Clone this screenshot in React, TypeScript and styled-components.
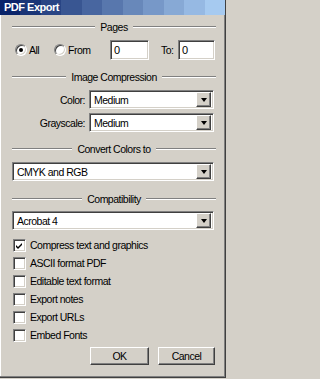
import React from 'react';
import styled, { createGlobalStyle, css } from 'styled-components';

const GlobalStyle = createGlobalStyle`
  html, body {
    margin: 0;
    padding: 0;
    background: #d4d0c8;
  }
`;

// banded title gradient, like a 256-colour display
const from = [10, 36, 106];
const to = [166, 202, 240];
const BANDS = 11;
const bandStops = Array.from({ length: BANDS }, (_, i) => {
  const t = i / (BANDS - 1);
  const c = from.map((v, k) => Math.round(v + (to[k] - v) * t));
  const a = ((i / BANDS) * 100).toFixed(2);
  const b = (((i + 1) / BANDS) * 100).toFixed(2);
  return `rgb(${c.join(',')}) ${a}%, rgb(${c.join(',')}) ${b}%`;
}).join(', ');

const sunken = css`
  border-top: 1px solid #808080;
  border-left: 1px solid #808080;
  border-bottom: 1px solid #ffffff;
  border-right: 1px solid #ffffff;
  box-shadow: inset 1px 1px 0 #404040, inset -1px -1px 0 #d4d0c8;
`;

const raised = css`
  border-top: 1px solid #ffffff;
  border-left: 1px solid #ffffff;
  border-bottom: 1px solid #404040;
  border-right: 1px solid #404040;
  box-shadow: inset -1px -1px 0 #808080;
`;

const Window = styled.div`
  box-sizing: border-box;
  width: 226px;
  height: 378px;
  background: #d4d0c8;
  border-right: 1px solid #404040;
  border-bottom: 1px solid #404040;
  box-shadow: inset -1px -1px 0 #808080, inset 1px 0 0 #ffffff;
  font-family: 'Liberation Sans', Arial, sans-serif;
  font-size: 10.5px;
  letter-spacing: -0.5px;
  color: #000;
  display: flex;
  flex-direction: column;
`;

const TitleBar = styled.div`
  height: 15px;
  line-height: 15px;
  padding-left: 4px;
  background: linear-gradient(to right, ${bandStops});
  color: #ffffff;
  font-weight: 700;
  font-size: 11px;
  letter-spacing: -0.5px;
`;

const Content = styled.div`
  display: flex;
  flex-direction: column;
  padding: 0 9px 0 12px;
`;

const GroupHeader = styled.div<{ $top: number }>`
  margin-top: ${(p) => p.$top}px;
  height: 12px;
  display: flex;
  align-items: center;
  gap: 5px;
  white-space: nowrap;

  &::before,
  &::after {
    content: '';
    flex: 1;
    height: 0;
    border-top: 1px solid #808080;
    border-bottom: 1px solid #ffffff;
  }
`;

const Row = styled.div<{ $top: number; $height?: number }>`
  margin-top: ${(p) => p.$top}px;
  height: ${(p) => p.$height ?? 19}px;
  display: flex;
  align-items: center;
`;

const RadioLabel = styled.label<{ $width: number }>`
  display: flex;
  align-items: center;
  gap: 2px;
  width: ${(p) => p.$width}px;
`;

const RadioCircle = styled.span<{ $checked?: boolean }>`
  box-sizing: border-box;
  width: 12px;
  height: 12px;
  border-radius: 50%;
  background: #ffffff;
  ${sunken};
  display: flex;
  align-items: center;
  justify-content: center;

  &::after {
    content: '';
    width: 4px;
    height: 4px;
    border-radius: 50%;
    background: ${(p) => (p.$checked ? '#000' : 'transparent')};
  }
`;

const TextBox = styled.div<{ $width: number }>`
  box-sizing: border-box;
  width: ${(p) => p.$width}px;
  height: 20px;
  background: #ffffff;
  ${sunken};
  padding: 2px 0 0 3px;
  line-height: 15px;
  font-size: 11px;
`;

const FieldLabel = styled.span`
  width: 73px;
  text-align: right;
  margin-right: 4px;
`;

const SelectBox = styled.div<{ $width: number }>`
  box-sizing: border-box;
  width: ${(p) => p.$width}px;
  height: 19px;
  background: #ffffff;
  ${sunken};
  display: flex;
  align-items: center;
  padding: 2px;
`;

const SelectValue = styled.span`
  flex: 1;
  padding-left: 2px;
  white-space: nowrap;
  overflow: hidden;
`;

const DropButton = styled.span`
  box-sizing: border-box;
  width: 15px;
  height: 15px;
  background: #d4d0c8;
  ${raised};
  display: flex;
  align-items: center;
  justify-content: center;

  &::after {
    content: '';
    width: 0;
    height: 0;
    border-left: 3.5px solid transparent;
    border-right: 3.5px solid transparent;
    border-top: 4px solid #000;
    margin-top: 1px;
  }
`;

const CheckList = styled.div`
  margin-top: 6px;
  display: flex;
  flex-direction: column;
`;

const CheckRow = styled.label`
  height: 18px;
  display: flex;
  align-items: center;
  gap: 4px;
  padding-left: 1px;
  white-space: nowrap;
`;

const CheckBox = styled.span`
  box-sizing: border-box;
  width: 13px;
  height: 13px;
  background: #ffffff;
  ${sunken};
  display: flex;
  align-items: center;
  justify-content: center;
`;

const ButtonRow = styled.div`
  margin-top: 3px;
  display: flex;
  justify-content: flex-end;
  gap: 9px;
  padding-right: 1px;
`;

const Button = styled.button<{ $width: number }>`
  box-sizing: border-box;
  width: ${(p) => p.$width}px;
  height: 18px;
  padding: 0;
  background: #d4d0c8;
  ${raised};
  font: inherit;
  letter-spacing: inherit;
  color: #000;
`;

const Select = ({ value, width }: { value: string; width: number }) => (
  <SelectBox $width={width}>
    <SelectValue>{value}</SelectValue>
    <DropButton />
  </SelectBox>
);

const Check = ({ label, checked }: { label: string; checked?: boolean }) => (
  <CheckRow>
    <CheckBox>
      {checked && (
        <svg width="7" height="7" viewBox="0 0 7 7">
          <path d="M0 3 L2 5 L6 1 L6 3 L2 7 L0 5 Z" fill="#000" />
        </svg>
      )}
    </CheckBox>
    {label}
  </CheckRow>
);

const options = [
  { label: 'Compress text and graphics', checked: true },
  { label: 'ASCII format PDF' },
  { label: 'Editable text format' },
  { label: 'Export notes' },
  { label: 'Export URLs' },
  { label: 'Embed Fonts' },
];

export default function App() {
  return (
    <>
      <GlobalStyle />
      <Window>
        <TitleBar>PDF Export</TitleBar>
        <Content>
          <GroupHeader $top={6}>Pages</GroupHeader>
          <Row $top={7} $height={20}>
            <span style={{ width: 3 }} />
            <RadioLabel $width={39}>
              <RadioCircle $checked />
              All
            </RadioLabel>
            <RadioLabel $width={56}>
              <RadioCircle />
              From
            </RadioLabel>
            <TextBox $width={39}>0</TextBox>
            <span style={{ width: 12 }} />
            <span style={{ width: 17 }}>To:</span>
            <TextBox $width={37}>0</TextBox>
          </Row>

          <GroupHeader $top={11}>Image Compression</GroupHeader>
          <Row $top={7}>
            <FieldLabel>Color:</FieldLabel>
            <Select value="Medium" width={125} />
          </Row>
          <Row $top={4}>
            <FieldLabel>Grayscale:</FieldLabel>
            <Select value="Medium" width={125} />
          </Row>

          <GroupHeader $top={11}>Convert Colors to</GroupHeader>
          <Row $top={7}>
            <Select value="CMYK and RGB" width={202} />
          </Row>

          <GroupHeader $top={12}>Compatibility</GroupHeader>
          <Row $top={6}>
            <Select value="Acrobat 4" width={202} />
          </Row>

          <CheckList>
            {options.map((o) => (
              <Check key={o.label} label={o.label} checked={o.checked} />
            ))}
          </CheckList>

          <ButtonRow>
            <Button $width={59}>OK</Button>
            <Button $width={57}>Cancel</Button>
          </ButtonRow>
        </Content>
      </Window>
    </>
  );
}
